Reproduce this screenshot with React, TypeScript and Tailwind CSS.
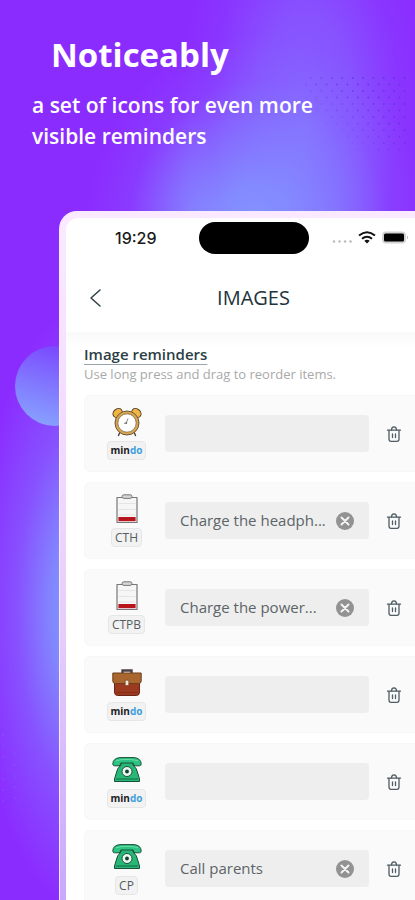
import { useState } from "react";

type IconName = "alarm" | "battery" | "briefcase" | "phone";

interface Reminder {
  id: number;
  icon: IconName;
  code?: string;
  text: string;
}

const initialReminders: Reminder[] = [
  { id: 1, icon: "alarm", text: "" },
  { id: 2, icon: "battery", code: "CTH", text: "Charge the headph..." },
  { id: 3, icon: "battery", code: "CTPB", text: "Charge the power..." },
  { id: 4, icon: "briefcase", text: "" },
  { id: 5, icon: "phone", text: "" },
  { id: 6, icon: "phone", code: "CP", text: "Call parents" },
];

function AlarmIcon() {
  return (
    <svg viewBox="0 0 30 30" className="size-[30px]" aria-hidden="true">
      <path d="M8 25 L6.5 28.5 M22 25 L23.5 28.5" stroke="#4a4238" strokeWidth="1.4" strokeLinecap="round" />
      <ellipse cx="5.6" cy="6" rx="5" ry="4" transform="rotate(-40 5.6 6)" fill="#f0b544" stroke="#4a3a20" />
      <ellipse cx="24.4" cy="6" rx="5" ry="4" transform="rotate(40 24.4 6)" fill="#f0b544" stroke="#4a3a20" />
      <path d="M6.5 10.5 L9 8 M23.5 10.5 L21 8" stroke="#4a3a20" strokeWidth="1.6" />
      <circle cx="15" cy="16" r="12" fill="#d9a650" stroke="#6b5638" strokeWidth="1" />
      <circle cx="15" cy="16" r="9.2" fill="#fff" stroke="#7a664a" strokeWidth="0.8" />
      <path d="M16 11.5 L14.3 16 L12 16.4" fill="none" stroke="#888" strokeWidth="1" />
      <circle cx="14.3" cy="16" r="0.9" fill="#666" />
    </svg>
  );
}

function BatteryIcon() {
  return (
    <svg viewBox="0 0 30 30" className="size-[30px]" aria-hidden="true">
      <path d="M5 3.5 H25 V28.5 H5 Z" fill="#f6f6f6" stroke="#77777a" strokeWidth="1.2" strokeLinejoin="round" />
      <rect x="10" y="0.8" width="10" height="3.6" rx="1.8" fill="#d4d4d4" stroke="#77777a" />
      <path d="M6.5 9.5 H23.5 M6.5 15.5 H23.5 M6.5 21 H23.5" stroke="#e4e4e4" />
      <rect x="6.4" y="23" width="17.2" height="4.2" fill="#b8141c" />
    </svg>
  );
}

function BriefcaseIcon() {
  return (
    <svg viewBox="0 0 30 30" className="size-[30px]" aria-hidden="true">
      <path d="M10.5 5 V2.5 H19.5 V5" fill="none" stroke="#4d4041" strokeWidth="2.4" />
      <path d="M2.5 14 H27.5 V24 Q27.5 27.5 24.5 27.5 H5.5 Q2.5 27.5 2.5 24 Z" fill="#9c3a20" stroke="#6b2416" />
      <path d="M4.5 24.5 H25.5" stroke="#7e2b18" strokeWidth="0.8" />
      <path d="M0.8 5 H29.2 V13 Q29.2 15.5 26.5 15.5 H3.5 Q0.8 15.5 0.8 13 Z" fill="#a9672f" stroke="#6f3f1d" />
      <rect x="13.2" y="12.2" width="3.6" height="5.4" rx="1" fill="#f3e7d8" stroke="#6f3f1d" strokeWidth="0.7" />
    </svg>
  );
}

function PhoneIcon() {
  return (
    <svg viewBox="0 0 30 30" className="size-[30px]" aria-hidden="true">
      <path
        d="M9 6 H21 V10 Q25 13 26 19 L27.5 24 V26.5 H2.5 V24 L4 19 Q5 13 9 10 Z"
        fill="#27b877"
        stroke="#1c4f39"
        strokeLinejoin="round"
      />
      <path
        d="M0.8 9 Q1 3.2 8 2.6 H22 Q29 3.2 29.2 9 Q29 10.8 27.5 10.8 H23 Q21.5 10.8 21.2 8 H8.8 Q8.5 10.8 7 10.8 H2.5 Q1 10.8 0.8 9 Z"
        fill="#2cc482"
        stroke="#1c4f39"
      />
      <path d="M4 5.8 Q8 4.4 15 4.4 Q22 4.4 26 5.8" fill="none" stroke="#7be0b1" strokeWidth="0.8" />
      <circle cx="15" cy="16.5" r="5" fill="#e9f8f0" stroke="#1c4f39" />
      <circle cx="15" cy="16.5" r="1.9" fill="#14402d" />
      <path d="M4 24 H26" stroke="#14774a" strokeWidth="1.2" />
    </svg>
  );
}

const icons: Record<IconName, () => React.JSX.Element> = {
  alarm: AlarmIcon,
  battery: BatteryIcon,
  briefcase: BriefcaseIcon,
  phone: PhoneIcon,
};

function TrashIcon() {
  return (
    <svg viewBox="0 0 18 18" className="size-[18px]" fill="none" stroke="#4f5d64" strokeWidth="1.3" strokeLinecap="round" aria-hidden="true">
      <path d="M2.5 5.2 H15.5" />
      <path d="M6.5 5 Q6.500 1.8 9 1.8 Q11.5 1.8 11.5 5" />
      <path d="M4 5.5 V14 Q4 16.3 6 16.3 H12 Q14 16.3 14 14 V5.5" />
      <path d="M7.5 9 V12.5 M10.5 9 V12.5" />
    </svg>
  );
}

function StatusIcons() {
  return (
    <svg viewBox="0 0 78 16" className="h-4 w-[78px]" aria-hidden="true">
      <g fill="#bdbdbd">
        <circle cx="3" cy="11.5" r="1.3" />
        <circle cx="8.5" cy="11.5" r="1.3" />
        <circle cx="14" cy="11.5" r="1.3" />
        <circle cx="19.500" cy="11.5" r="1.3" />
      </g>
      <g fill="none" stroke="#111" strokeWidth="2">
        <path d="M28 5.6 Q36 -1 44 5.6" />
        <path d="M31 8.8 Q36 4.600 41 8.8" />
      </g>
      <path d="M33.300 10.8 Q36 8.8 38.700 10.8 L36 13.6 Z" fill="#111" />
      <rect x="51" y="1.5" width="24" height="12" rx="4" fill="#d2d2d2" />
      <rect x="53" y="3.5" width="20" height="8" rx="1.5" fill="#000" />
      <path d="M76 5.5 Q78 7.5 76 9.5 Z" fill="#b5b5b5" />
    </svg>
  );
}

// Staggered dots, fading out towards the lower left
function DotGrid() {
  const dots = [];
  for (let row = 0; row < 12; row++) {
    for (let col = 0; col < 10; col++) {
      const strength = col / 9 - row / 14 + 0.35;
      if (strength <= 0) continue;
      dots.push(
        <circle
          key={`${row}-${col}`}
          cx={311 + col * 10.4 - (row % 2) * 5.2}
          cy={78 + row * 6.5}
          r="0.9"
          opacity={Math.min(strength, 0.8)}
        />
      );
    }
  }
  return <g fill="#5a38cc">{dots}</g>;
}

function Backdrop() {
  return (
    <div className="absolute inset-0 bg-[#8b2cff]">
      <div className="absolute inset-0 bg-[radial-gradient(ellipse_170px_190px_at_258px_225px,#82b4ff_0%,#82a6fff0_22%,#8486ffb8_50%,#8757ff55_76%,#8b2cff00_100%)]" />
      <div className="absolute inset-0 bg-[radial-gradient(ellipse_125px_260px_at_305px_120px,#8484ffa0_0%,#8474ff88_40%,#8750ff44_75%,#8b2cff00_100%)]" />
      <div className="absolute inset-0 bg-[radial-gradient(ellipse_110px_300px_at_85px_610px,#7fa0ff_0%,#8190ffea_30%,#8568ffa0_62%,#8b2cff00_100%)]" />
      <svg className="absolute inset-0 size-full" aria-hidden="true">
        <DotGrid />
        <g fill="#6b8cff" opacity="0.4">
          {[735, 746, 757, 768, 779, 790, 801].map((y, i) => (
            <g key={y}>
              <circle cx={3} cy={y} r="0.8" />
              {i > 1 && <circle cx={15} cy={y - 3} r="0.8" />}
              {i > 3 && <circle cx={27} cy={y - 6} r="0.6" />}
            </g>
          ))}
        </g>
      </svg>
      <div className="absolute top-[346px] left-[15px] size-20 rounded-full bg-[linear-gradient(195deg,#7b48ff_10%,#8070ff_45%,#88a4ff_95%)]" />
    </div>
  );
}

interface RowProps {
  reminder: Reminder;
  onChange: (text: string) => void;
  onRemove: () => void;
}

function ReminderRow({ reminder, onChange, onRemove }: RowProps) {
  const Icon = icons[reminder.icon];

  return (
    <li className="flex h-[77px] items-center gap-4 rounded-md border border-[#f7f7f7] bg-[#fafafa] px-[19px]">
      <div className="flex w-[45px] flex-col items-center gap-1">
        <Icon />
        <span className="flex h-[19px] items-center rounded-[4px] border border-[#e6e6e6] bg-[#f2f2f2] px-[3px] text-xs text-[#555c60]">
          {reminder.code ?? (
            <b className="text-[10px] text-[#1c1c1c]">
              min<span className="text-[#3f9fdc]">do</span>
            </b>
          )}
        </span>
      </div>
      <div className="flex h-[37px] min-w-0 flex-1 items-center rounded-[4px] bg-[#eee] px-[15px]">
        <input
          type="text"
          aria-label="Reminder text"
          value={reminder.text}
          onChange={(e) => onChange(e.target.value)}
          className="w-full min-w-0 flex-1 bg-transparent text-[15px] text-[#5c6468] outline-none"
        />
        {reminder.text && (
          <button type="button" aria-label="Clear text" onClick={() => onChange("")}>
            <svg viewBox="0 0 18 18" className="size-[18px]" aria-hidden="true">
              <circle cx="9" cy="9" r="9" fill="#929292" />
              <path d="M5.5 5.5 L12.5 12.5 M12.5 5.5 L5.5 12.5" stroke="#f4f4f4" strokeWidth="2" strokeLinecap="round" />
            </svg>
          </button>
        )}
      </div>
      <button type="button" aria-label="Delete reminder" onClick={onRemove}>
        <TrashIcon />
      </button>
    </li>
  );
}

export default function App() {
  const [reminders, setReminders] = useState(initialReminders);

  const updateText = (id: number, text: string) =>
    setReminders((items) => items.map((r) => (r.id === id ? { ...r, text } : r)));

  const remove = (id: number) => setReminders((items) => items.filter((r) => r.id !== id));

  return (
    <div className="relative h-screen overflow-hidden font-['Open_Sans','Noto_Sans',sans-serif]">
      <Backdrop />
      <div className="relative">
        {/* Headline */}
        <header className="h-[211px] px-8 pt-8 text-white">
          <h1 className="pl-[19px] text-[33px] leading-[46px] font-bold">Noticeably</h1>
          <p className="mt-3 text-[21px] leading-[31px] font-semibold">
            a set of icons for even more
            <br />
            visible reminders
          </p>
        </header>

        {/* Phone, runs off the right edge */}
        <main className="-mr-[33px] ml-[59px] rounded-t-[18px] border border-b-0 border-[#f8eaff] bg-[linear-gradient(to_bottom,#fbeaff_0px,#f4dcff_200px,#e6cdfa_420px,#c8a8fa_690px)] px-1.5 pt-1.5">
          <div className="rounded-t-xl bg-white">
            <div className="grid h-10 grid-cols-[1fr_110px_1fr] items-center">
              <span className="pl-[49px] font-['Inter',sans-serif] text-base font-medium text-[#1a1a1a]">19:29</span>
              <div className="h-8 rounded-full bg-black" />
              <div className="pl-[22px]">
                <StatusIcons />
              </div>
            </div>

            <div className="grid h-[74px] grid-cols-[1fr_auto_1fr] items-center px-5 pt-1.5">
              <button type="button" aria-label="Back" className="w-5">
                <svg viewBox="0 0 20 20" className="size-5" fill="none" stroke="#2c3e46" strokeWidth="1.5" strokeLinecap="round" strokeLinejoin="round" aria-hidden="true">
                  <path d="M14 2 L5 10 L14 18" />
                </svg>
              </button>
              <h2 className="text-xl font-medium text-[#22333b]">IMAGES</h2>
            </div>

            <section className="bg-[linear-gradient(to_bottom,#f9f9f9,#fff_16px)] px-[18px] pt-[13px]">
              <h3 className="text-[15px] leading-[18px] font-semibold text-[#2c3e46] underline decoration-[#9aa5aa] underline-offset-4">
                Image reminders
              </h3>
              <p className="mt-0.5 text-[13px] leading-[18px] text-[#a9a9a9]">Use long press and drag to reorder items.</p>
              <ul className="mt-3 flex flex-col gap-2.5">
                {reminders.map((r) => (
                  <ReminderRow
                    key={r.id}
                    reminder={r}
                    onChange={(text) => updateText(r.id, text)}
                    onRemove={() => remove(r.id)}
                  />
                ))}
              </ul>
            </section>
          </div>
        </main>
      </div>
    </div>
  );
}
